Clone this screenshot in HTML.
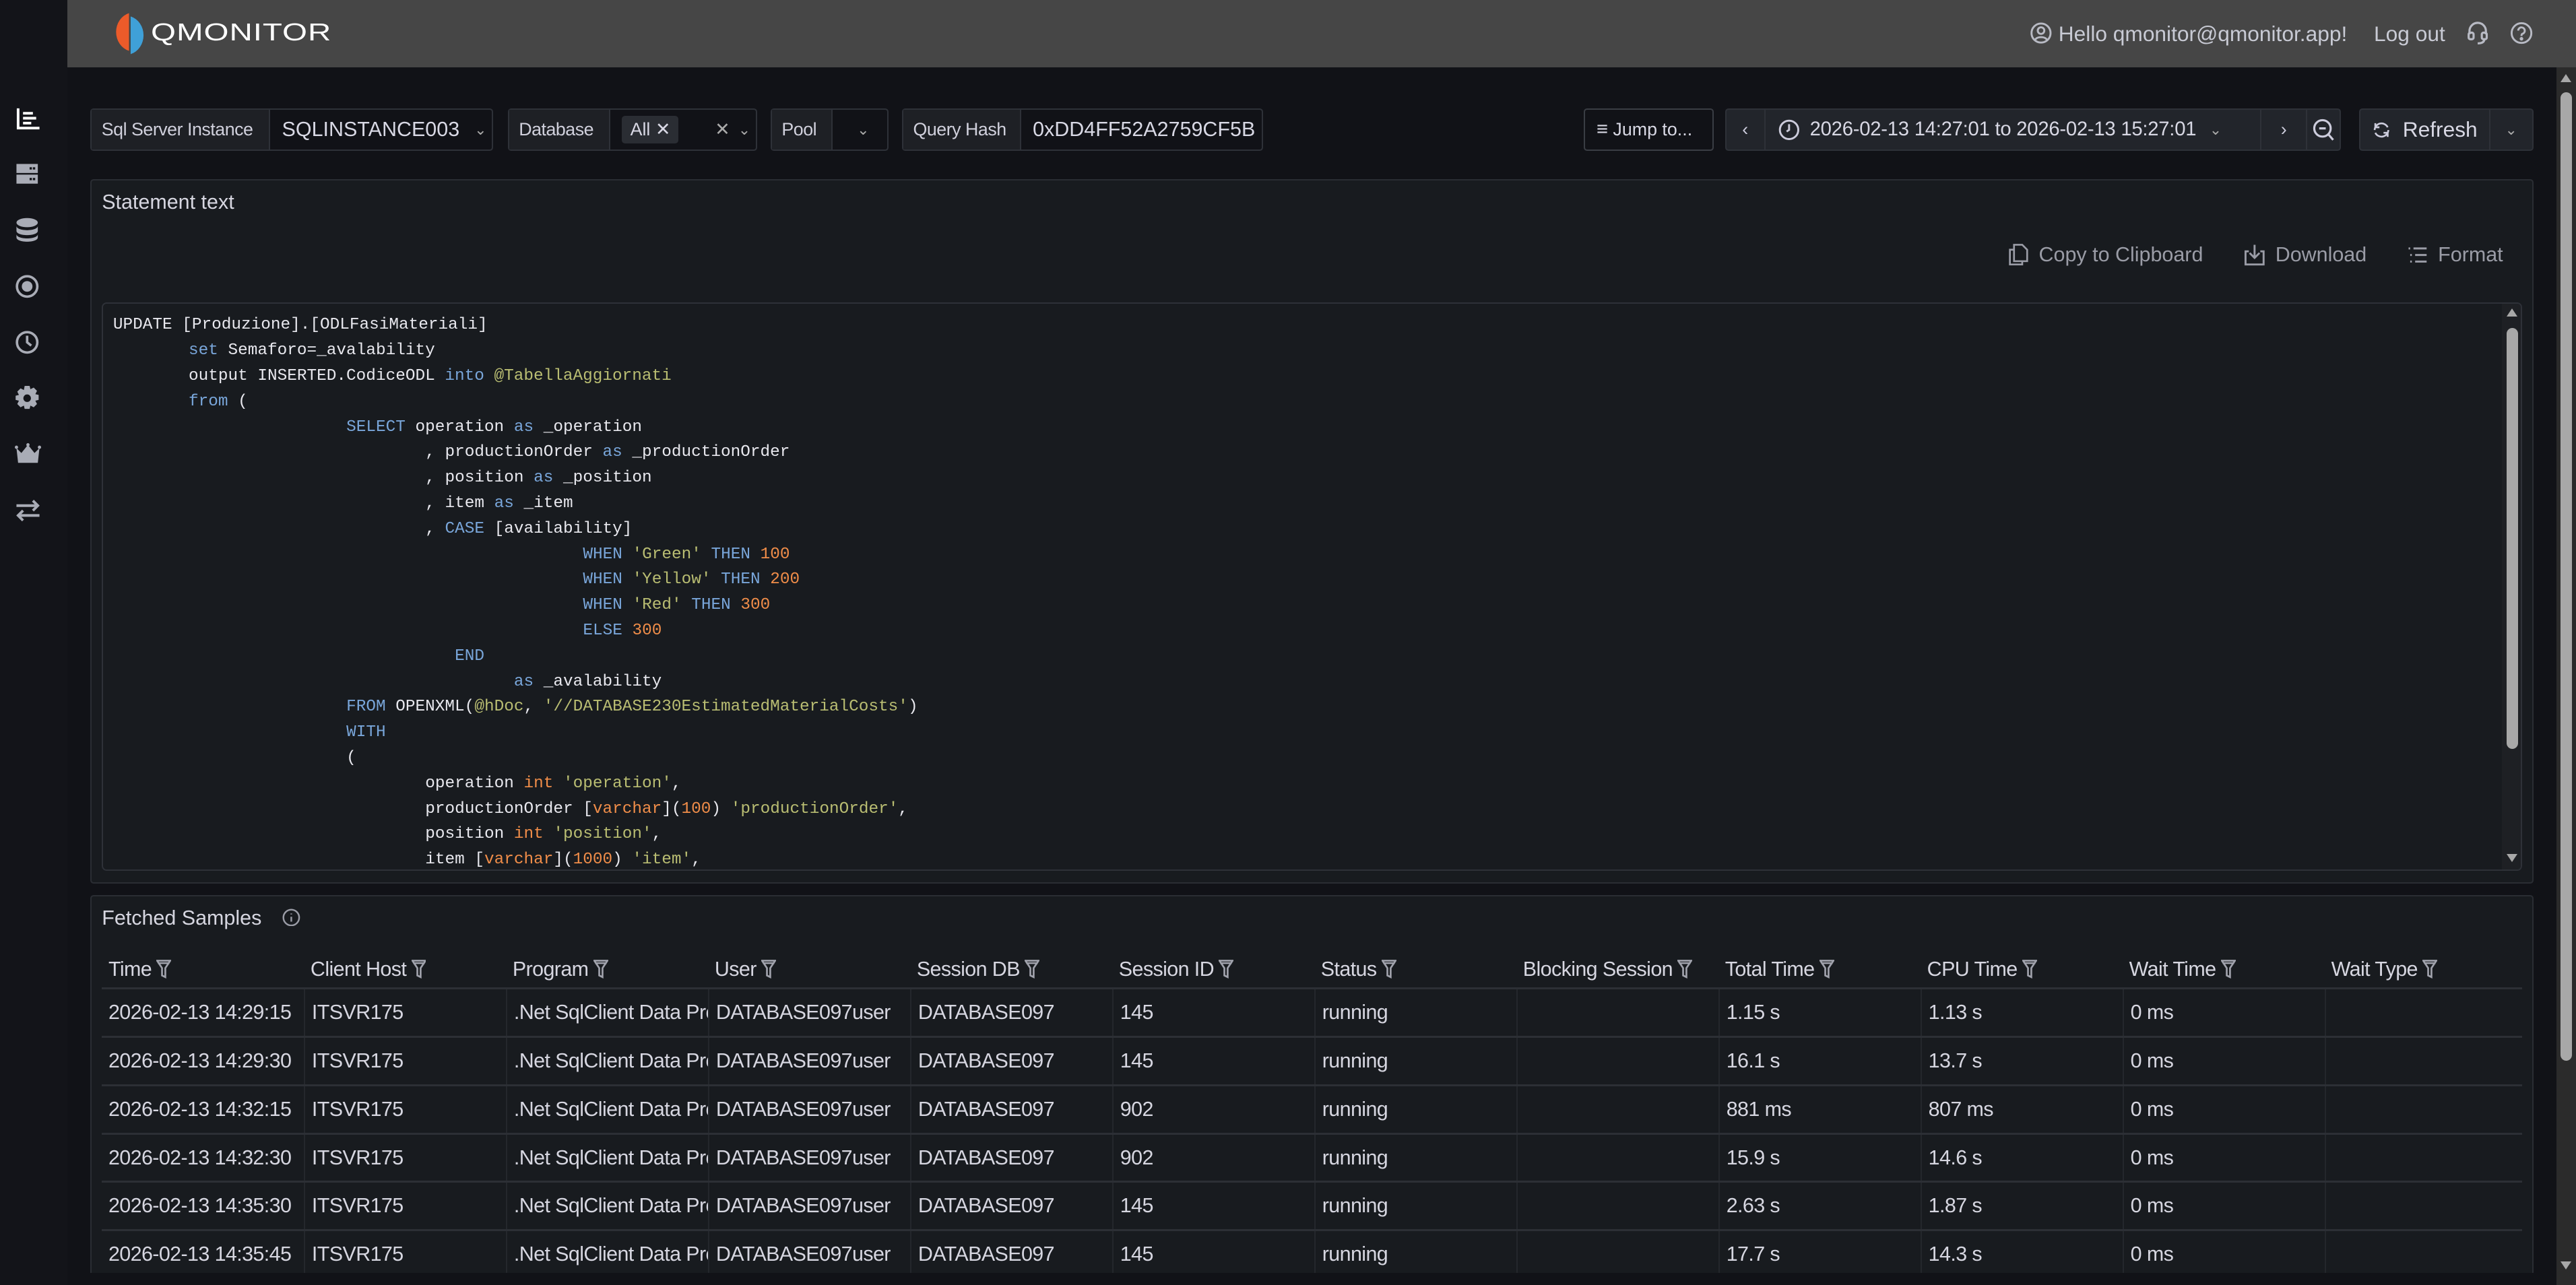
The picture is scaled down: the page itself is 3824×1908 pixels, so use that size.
<!DOCTYPE html>
<html><head><meta charset="utf-8">
<style>
html,body{margin:0;padding:0;background:#111217;width:3824px;height:1908px;overflow:hidden}
#r{zoom:2.43878;width:1568px;height:783px;position:relative;font-family:"Liberation Sans",sans-serif;color:#ccccdc;overflow:hidden}
.a{position:absolute}
.hdr{left:41px;top:0;width:1527px;height:41px;background:#464646}
.side{left:0;top:0;width:41px;height:783px;background:#131419}
.box{position:absolute;top:66px;height:26px;border:1px solid #2e3138;box-sizing:border-box;border-radius:2px;display:flex;align-items:center;font-size:11px;white-space:nowrap}
.lbl{background:#1e2025;height:100%;display:flex;align-items:center;padding:0 6px;border-right:1px solid #2e3138;color:#d0d0dc;flex-shrink:0;letter-spacing:-0.2px}
.val{display:flex;align-items:center;padding:0 7px;font-size:13px;color:#d8d8e4;height:100%;flex-shrink:0;white-space:nowrap}
.panel{position:absolute;left:55px;width:1487px;background:#181b1f;border:1px solid #2a2d33;box-sizing:border-box;border-radius:2px}
.code{position:absolute;left:62px;top:184px;width:1473px;height:346px;border:1px solid #2e3138;border-radius:3px;box-sizing:border-box;overflow:hidden;font-family:"Liberation Mono",monospace;font-size:10px;color:#e8e8ee}
.ln{position:absolute;white-space:pre;height:15px;line-height:15px;margin-top:2px}
.k{color:#79a6da}.s{color:#b9bd72}.n{color:#f08d49}
.tb{position:absolute;left:62px;top:578px;width:1473px;font-size:12.5px;letter-spacing:-0.25px}
.row{position:absolute;left:0;width:1473px;height:29.5px;border-top:1.5px solid #2c2f35;box-sizing:border-box}
.c{position:absolute;top:0;height:100%;width:123px;box-sizing:border-box;padding-left:4px;line-height:28px;white-space:nowrap;overflow:hidden;border-left:1px solid #24272c;color:#d6d6e0}
.h{position:absolute;top:5px;padding-left:4px;color:#d6d6e0;white-space:nowrap}
.f{display:inline-block;vertical-align:-2px;margin-left:3px}
.tbtn{position:absolute;top:148px;font-size:12.5px;color:#9a9ca6;display:flex;align-items:center;gap:6px;white-space:nowrap}
</style></head><body><div id="r">
<div class="a side"></div>
<div class="a hdr"></div>
<svg class="a" style="left:66px;top:7px" width="26" height="27" viewBox="0 0 26 27">
<path d="M12.5 1 A11 12 0 0 0 12.5 24 Z" fill="#ec5b2a"/>
<path d="M13.5 3 A11 12 0 0 1 13.5 26 Z" fill="#3fa0d8"/>
</svg>
<div class="a" style="left:92px;top:11px;font-size:15px;color:#fff;letter-spacing:0.3px;transform:scaleX(1.3);transform-origin:left">QMONITOR</div>
<svg class="a" style="left:1236px;top:13px" width="13" height="14" viewBox="0 0 13 14" fill="none" stroke="#b8bac4" stroke-width="1.2"><circle cx="6.5" cy="7" r="5.8"/><circle cx="6.5" cy="5.5" r="2"/><path d="M3 11c1-2 6-2 7 0"/></svg>
<div class="a" style="left:1253px;top:13px;font-size:13px;color:#c8cad4">Hello qmonitor@qmonitor.app!</div>
<div class="a" style="left:1445px;top:13px;font-size:13px;color:#c8cad4">Log out</div>
<svg class="a" style="left:1501px;top:12px" width="14" height="16" viewBox="0 0 14 16" fill="none" stroke="#b8bac4" stroke-width="1.3"><path d="M2 9V7a5 5 0 0 1 10 0v2"/><rect x="1.5" y="8" width="3" height="4" rx="1"/><rect x="9.5" y="8" width="3" height="4" rx="1"/><path d="M11 12c0 2-2 2.5-4 2.5"/></svg>
<svg class="a" style="left:1528px;top:13px" width="14" height="14" viewBox="0 0 14 14" fill="none" stroke="#b8bac4" stroke-width="1.2"><circle cx="7" cy="7" r="6"/><path d="M5 5.5a2 2 0 1 1 2.5 2c-.5.3-.5.8-.5 1.3"/><circle cx="7" cy="10.5" r=".5" fill="#b8bac4"/></svg>
<svg class="a" style="left:9px;top:64px" width="16" height="16" viewBox="0 0 16 16" fill="none" stroke="#fff" stroke-width="1.6"><path d="M2 2v12h13"/><path d="M5 5h6M5 8h8M5 11h5"/></svg>
<svg class="a" style="left:9px;top:99px" width="15" height="14" viewBox="0 0 15 14" fill="#a9acb6"><rect x="1" y="1" width="13" height="5.5"/><rect x="1" y="7.5" width="13" height="5.5"/><rect x="9" y="3" width="1.4" height="1.4" fill="#131419"/><rect x="11" y="3" width="1.4" height="1.4" fill="#131419"/><rect x="9" y="9.5" width="1.4" height="1.4" fill="#131419"/><rect x="11" y="9.5" width="1.4" height="1.4" fill="#131419"/></svg>
<svg class="a" style="left:9px;top:132px" width="15" height="16" viewBox="0 0 15 16" fill="#a9acb6"><ellipse cx="7.5" cy="3.5" rx="6.5" ry="2.8"/><path d="M1 5.5c0 3.5 13 3.5 13 0v3c0 3.5-13 3.5-13 0z"/><path d="M1 10.5c0 3.5 13 3.5 13 0v2c0 3.5-13 3.5-13 0z"/></svg>
<svg class="a" style="left:9px;top:167px" width="15" height="15" viewBox="0 0 15 15" fill="none" stroke="#a9acb6" stroke-width="1.5"><circle cx="7.5" cy="7.5" r="6.2"/><circle cx="7.5" cy="7.5" r="2.5" fill="#a9acb6"/></svg>
<svg class="a" style="left:9px;top:201px" width="15" height="15" viewBox="0 0 15 15" fill="none" stroke="#a9acb6" stroke-width="1.5"><circle cx="7.5" cy="7.5" r="6.2"/><path d="M7.5 3.5v4l2.5 2"/></svg>
<svg class="a" style="left:9px;top:235px" width="15" height="15" viewBox="0 0 15 15" fill="#a9acb6"><path d="M6 0h3l.5 2 2-1 2 2-1 2 2 .5v3l-2 .5 1 2-2 2-2-1-.5 2H6l-.5-2-2 1-2-2 1-2-2-.5V6l2-.5-1-2 2-2 2 1z"/><circle cx="7.5" cy="7.5" r="2.3" fill="#131419"/></svg>
<svg class="a" style="left:9px;top:270px" width="16" height="13" viewBox="0 0 16 13" fill="#a9acb6"><path d="M1 3l3 3 4-5 4 5 3-3-1 9H2z"/><circle cx="1" cy="2.5" r="1"/><circle cx="8" cy="1" r="1"/><circle cx="15" cy="2.5" r="1"/></svg>
<svg class="a" style="left:9px;top:304px" width="16" height="14" viewBox="0 0 16 14" fill="none" stroke="#a9acb6" stroke-width="1.6"><path d="M1 4h13M11 1l3 3-3 3M15 10H2M5 7l-3 3 3 3"/></svg>
<!-- filters -->
<div class="box" style="left:55px;width:245px"><div class="lbl" style="width:96px">Sql Server Instance</div><div class="val" style="font-size:12.5px">SQLINSTANCE003<span style="margin-left:9px;font-size:9px;color:#aaa">&#8964;</span></div></div>
<div class="box" style="left:309px;width:152px"><div class="lbl" style="width:49px">Database</div><div class="val"><span style="background:#2a2d33;padding:2px 5px;font-size:11px;border-radius:2px;white-space:nowrap">All &#x2715;</span><span style="margin-left:22px;font-size:11px;color:#aaa">&#x2715;</span><span style="margin-left:5px;font-size:9px;color:#aaa">&#8964;</span></div></div>
<div class="box" style="left:469px;width:72px"><div class="lbl" style="width:24px">Pool</div><div class="val" style="padding-left:15px"><span style="font-size:9px;color:#aaa">&#8964;</span></div></div>
<div class="box" style="left:549px;width:220px"><div class="lbl" style="width:59px">Query Hash</div><div class="val" style="font-size:12.5px">0xDD4FF52A2759CF5B</div></div>
<div class="box" style="left:964px;width:79px;border-color:#3a3d44"><div class="val" style="font-size:11px;padding:0 7px"><span style="font-size:12px;margin-right:3px">&#8801;</span>Jump to...</div></div>
<div class="box" style="left:1050px;width:375px;background:#22252b">
 <div style="width:23px;height:100%;border-right:1px solid #2e3138;text-align:center;line-height:24px;font-size:11px;flex-shrink:0">&#8249;</div>
 <div class="val" style="width:302px;box-sizing:border-box;border-right:1px solid #2e3138;padding-left:8px;font-size:12px;letter-spacing:-0.1px"><svg width="13" height="13" viewBox="0 0 13 13" fill="none" stroke="#ccccdc" stroke-width="1.2" style="margin-right:6px"><circle cx="6.5" cy="6.5" r="5.6"/><path d="M6.5 3v3.5l-1.5 1"/></svg>2026-02-13 14:27:01 to 2026-02-13 15:27:01<span style="margin-left:8px;font-size:9px;color:#aaa">&#8964;</span></div>
 <div style="width:27px;height:100%;border-right:1px solid #2e3138;text-align:center;line-height:24px;font-size:11px;flex-shrink:0">&#8250;</div>
 <div style="flex:1;display:flex;justify-content:center"><svg width="13" height="14" viewBox="0 0 13 14" fill="none" stroke="#ccccdc" stroke-width="1.3"><circle cx="6" cy="6" r="5"/><path d="M4 6h4M9.5 9.5l3 3.5"/></svg></div>
</div>
<div class="box" style="left:1436px;width:106px;background:#22252b">
 <div class="val" style="width:79px;box-sizing:border-box;border-right:1px solid #2e3138;padding-left:7px"><svg width="14" height="14" viewBox="0 0 14 14" fill="none" stroke="#ccccdc" stroke-width="1.3" style="margin-right:7px"><path d="M2.5 9A5 5 0 0 0 12 7M11.5 5A5 5 0 0 0 2 7M2.5 2v3h3M11.5 12V9h-3"/></svg>Refresh</div>
 <div style="flex:1;text-align:center;font-size:9px;color:#aaa">&#8964;</div>
</div>
<!-- statement panel -->
<div class="panel" style="top:109px;height:429px"></div>
<div class="a" style="left:62px;top:116px;font-size:12.5px;color:#d6d6e0">Statement text</div>
<div class="tbtn" style="left:1222px"><svg width="13" height="14" viewBox="0 0 13 14" fill="none" stroke="#9a9ca6" stroke-width="1.1"><path d="M4 1h5l3 3v7H4z"/><path d="M4 4H1.5v9H9v-2"/></svg>Copy to Clipboard</div>
<div class="tbtn" style="left:1366px"><svg width="13" height="14" viewBox="0 0 13 14" fill="none" stroke="#9a9ca6" stroke-width="1.2"><path d="M6.5 1v8M3.5 6l3 3 3-3M3 5H1v8h11V5h-2"/></svg>Download</div>
<div class="tbtn" style="left:1465px"><svg width="13" height="12" viewBox="0 0 13 12" fill="none" stroke="#9a9ca6" stroke-width="1.2"><path d="M1 2h1M4 2h8M2 6h1M5 6h7M2 10h1M5 10h7"/></svg>Format</div>
<div class="code">
<div class="ln" style="left:6px;top:4px">UPDATE [Produzione].[ODLFasiMateriali]</div>
<div class="ln" style="left:52px;top:19.5px"><span class="k">set</span> Semaforo=_avalability</div>
<div class="ln" style="left:52px;top:35px">output INSERTED.CodiceODL <span class="k">into</span> <span class="s">@TabellaAggiornati</span></div>
<div class="ln" style="left:52px;top:50.5px"><span class="k">from</span> (</div>
<div class="ln" style="left:148px;top:66px"><span class="k">SELECT</span> operation <span class="k">as</span> _operation</div>
<div class="ln" style="left:196px;top:81.5px">, productionOrder <span class="k">as</span> _productionOrder</div>
<div class="ln" style="left:196px;top:97px">, position <span class="k">as</span> _position</div>
<div class="ln" style="left:196px;top:112.5px">, item <span class="k">as</span> _item</div>
<div class="ln" style="left:196px;top:128px">, <span class="k">CASE</span> [availability]</div>
<div class="ln" style="left:292px;top:143.5px"><span class="k">WHEN</span> <span class="s">'Green'</span> <span class="k">THEN</span> <span class="n">100</span></div>
<div class="ln" style="left:292px;top:159px"><span class="k">WHEN</span> <span class="s">'Yellow'</span> <span class="k">THEN</span> <span class="n">200</span></div>
<div class="ln" style="left:292px;top:174.5px"><span class="k">WHEN</span> <span class="s">'Red'</span> <span class="k">THEN</span> <span class="n">300</span></div>
<div class="ln" style="left:292px;top:190px"><span class="k">ELSE</span> <span class="n">300</span></div>
<div class="ln" style="left:214px;top:205.5px"><span class="k">END</span></div>
<div class="ln" style="left:250px;top:221px"><span class="k">as</span> _avalability</div>
<div class="ln" style="left:148px;top:236.5px"><span class="k">FROM</span> OPENXML(<span class="s">@hDoc</span>, <span class="s">'//DATABASE230EstimatedMaterialCosts'</span>)</div>
<div class="ln" style="left:148px;top:252px"><span class="k">WITH</span></div>
<div class="ln" style="left:148px;top:267.5px">(</div>
<div class="ln" style="left:196px;top:283px">operation <span class="n">int</span> <span class="s">'operation'</span>,</div>
<div class="ln" style="left:196px;top:298.5px">productionOrder [<span class="n">varchar</span>](<span class="n">100</span>) <span class="s">'productionOrder'</span>,</div>
<div class="ln" style="left:196px;top:314px">position <span class="n">int</span> <span class="s">'position'</span>,</div>
<div class="ln" style="left:196px;top:329.5px">item [<span class="n">varchar</span>](<span class="n">1000</span>) <span class="s">'item'</span>,</div>
<div class="a" style="left:1460px;top:0;width:12px;height:346px;background:#1e2024"></div>
<div class="a" style="left:1463px;top:15px;width:7px;height:256px;background:#a8a8a8;border-radius:4px"></div>
<div class="a" style="left:1463px;top:3px;width:0;height:0;border-left:3.5px solid transparent;border-right:3.5px solid transparent;border-bottom:5px solid #a8a8a8"></div>
<div class="a" style="left:1463px;top:335px;width:0;height:0;border-left:3.5px solid transparent;border-right:3.5px solid transparent;border-top:5px solid #a8a8a8"></div>
</div>
<!-- samples panel -->
<div class="panel" style="top:545px;height:240px"></div>
<div class="a" style="left:62px;top:552px;font-size:12.5px;color:#d6d6e0">Fetched Samples</div>
<svg class="a" style="left:172px;top:553px" width="11" height="11" viewBox="0 0 11 11" fill="none" stroke="#9a9ca6" stroke-width="1"><circle cx="5.5" cy="5.5" r="4.8"/><path d="M5.5 5v3M5.5 3v.6"/></svg>
<div class="tb">
<div class="h" style="left:0">Time<svg class="f" width="9" height="12" viewBox="0 0 9 12" fill="none" stroke="#a0a2ac" stroke-width="1.1"><path d="M.5 1h8L5.5 5.5V11l-2-1V5.5z"/><path d="M1 2.5h7"/></svg></div>
<div class="h" style="left:123px">Client Host<svg class="f" width="9" height="12" viewBox="0 0 9 12" fill="none" stroke="#a0a2ac" stroke-width="1.1"><path d="M.5 1h8L5.5 5.5V11l-2-1V5.5z"/><path d="M1 2.5h7"/></svg></div>
<div class="h" style="left:246px">Program<svg class="f" width="9" height="12" viewBox="0 0 9 12" fill="none" stroke="#a0a2ac" stroke-width="1.1"><path d="M.5 1h8L5.5 5.5V11l-2-1V5.5z"/><path d="M1 2.5h7"/></svg></div>
<div class="h" style="left:369px">User<svg class="f" width="9" height="12" viewBox="0 0 9 12" fill="none" stroke="#a0a2ac" stroke-width="1.1"><path d="M.5 1h8L5.5 5.5V11l-2-1V5.5z"/><path d="M1 2.5h7"/></svg></div>
<div class="h" style="left:492px">Session DB<svg class="f" width="9" height="12" viewBox="0 0 9 12" fill="none" stroke="#a0a2ac" stroke-width="1.1"><path d="M.5 1h8L5.5 5.5V11l-2-1V5.5z"/><path d="M1 2.5h7"/></svg></div>
<div class="h" style="left:615px">Session ID<svg class="f" width="9" height="12" viewBox="0 0 9 12" fill="none" stroke="#a0a2ac" stroke-width="1.1"><path d="M.5 1h8L5.5 5.5V11l-2-1V5.5z"/><path d="M1 2.5h7"/></svg></div>
<div class="h" style="left:738px">Status<svg class="f" width="9" height="12" viewBox="0 0 9 12" fill="none" stroke="#a0a2ac" stroke-width="1.1"><path d="M.5 1h8L5.5 5.5V11l-2-1V5.5z"/><path d="M1 2.5h7"/></svg></div>
<div class="h" style="left:861px">Blocking Session<svg class="f" width="9" height="12" viewBox="0 0 9 12" fill="none" stroke="#a0a2ac" stroke-width="1.1"><path d="M.5 1h8L5.5 5.5V11l-2-1V5.5z"/><path d="M1 2.5h7"/></svg></div>
<div class="h" style="left:984px">Total Time<svg class="f" width="9" height="12" viewBox="0 0 9 12" fill="none" stroke="#a0a2ac" stroke-width="1.1"><path d="M.5 1h8L5.5 5.5V11l-2-1V5.5z"/><path d="M1 2.5h7"/></svg></div>
<div class="h" style="left:1107px">CPU Time<svg class="f" width="9" height="12" viewBox="0 0 9 12" fill="none" stroke="#a0a2ac" stroke-width="1.1"><path d="M.5 1h8L5.5 5.5V11l-2-1V5.5z"/><path d="M1 2.5h7"/></svg></div>
<div class="h" style="left:1230px">Wait Time<svg class="f" width="9" height="12" viewBox="0 0 9 12" fill="none" stroke="#a0a2ac" stroke-width="1.1"><path d="M.5 1h8L5.5 5.5V11l-2-1V5.5z"/><path d="M1 2.5h7"/></svg></div>
<div class="h" style="left:1353px">Wait Type<svg class="f" width="9" height="12" viewBox="0 0 9 12" fill="none" stroke="#a0a2ac" stroke-width="1.1"><path d="M.5 1h8L5.5 5.5V11l-2-1V5.5z"/><path d="M1 2.5h7"/></svg></div>

<div class="row" style="top:23px"><div class="c" style="left:0;border-left:0">2026-02-13 14:29:15</div><div class="c" style="left:123px">ITSVR175</div><div class="c" style="left:246px">.Net SqlClient Data Provider</div><div class="c" style="left:369px">DATABASE097user</div><div class="c" style="left:492px">DATABASE097</div><div class="c" style="left:615px">145</div><div class="c" style="left:738px">running</div><div class="c" style="left:861px"></div><div class="c" style="left:984px">1.15 s</div><div class="c" style="left:1107px">1.13 s</div><div class="c" style="left:1230px">0 ms</div><div class="c" style="left:1353px;width:120px"></div></div>
<div class="row" style="top:52.5px"><div class="c" style="left:0;border-left:0">2026-02-13 14:29:30</div><div class="c" style="left:123px">ITSVR175</div><div class="c" style="left:246px">.Net SqlClient Data Provider</div><div class="c" style="left:369px">DATABASE097user</div><div class="c" style="left:492px">DATABASE097</div><div class="c" style="left:615px">145</div><div class="c" style="left:738px">running</div><div class="c" style="left:861px"></div><div class="c" style="left:984px">16.1 s</div><div class="c" style="left:1107px">13.7 s</div><div class="c" style="left:1230px">0 ms</div><div class="c" style="left:1353px;width:120px"></div></div>
<div class="row" style="top:82px"><div class="c" style="left:0;border-left:0">2026-02-13 14:32:15</div><div class="c" style="left:123px">ITSVR175</div><div class="c" style="left:246px">.Net SqlClient Data Provider</div><div class="c" style="left:369px">DATABASE097user</div><div class="c" style="left:492px">DATABASE097</div><div class="c" style="left:615px">902</div><div class="c" style="left:738px">running</div><div class="c" style="left:861px"></div><div class="c" style="left:984px">881 ms</div><div class="c" style="left:1107px">807 ms</div><div class="c" style="left:1230px">0 ms</div><div class="c" style="left:1353px;width:120px"></div></div>
<div class="row" style="top:111.5px"><div class="c" style="left:0;border-left:0">2026-02-13 14:32:30</div><div class="c" style="left:123px">ITSVR175</div><div class="c" style="left:246px">.Net SqlClient Data Provider</div><div class="c" style="left:369px">DATABASE097user</div><div class="c" style="left:492px">DATABASE097</div><div class="c" style="left:615px">902</div><div class="c" style="left:738px">running</div><div class="c" style="left:861px"></div><div class="c" style="left:984px">15.9 s</div><div class="c" style="left:1107px">14.6 s</div><div class="c" style="left:1230px">0 ms</div><div class="c" style="left:1353px;width:120px"></div></div>
<div class="row" style="top:141px"><div class="c" style="left:0;border-left:0">2026-02-13 14:35:30</div><div class="c" style="left:123px">ITSVR175</div><div class="c" style="left:246px">.Net SqlClient Data Provider</div><div class="c" style="left:369px">DATABASE097user</div><div class="c" style="left:492px">DATABASE097</div><div class="c" style="left:615px">145</div><div class="c" style="left:738px">running</div><div class="c" style="left:861px"></div><div class="c" style="left:984px">2.63 s</div><div class="c" style="left:1107px">1.87 s</div><div class="c" style="left:1230px">0 ms</div><div class="c" style="left:1353px;width:120px"></div></div>
<div class="row" style="top:170.5px"><div class="c" style="left:0;border-left:0">2026-02-13 14:35:45</div><div class="c" style="left:123px">ITSVR175</div><div class="c" style="left:246px">.Net SqlClient Data Provider</div><div class="c" style="left:369px">DATABASE097user</div><div class="c" style="left:492px">DATABASE097</div><div class="c" style="left:615px">145</div><div class="c" style="left:738px">running</div><div class="c" style="left:861px"></div><div class="c" style="left:984px">17.7 s</div><div class="c" style="left:1107px">14.3 s</div><div class="c" style="left:1230px">0 ms</div><div class="c" style="left:1353px;width:120px"></div></div>
</div>
<div class="a" style="left:41px;top:775px;width:1515px;height:8px;background:#111217"></div>
<div class="a" style="left:1556px;top:41px;width:12px;height:742px;background:#2b2b2b"></div>
<div class="a" style="left:1558.5px;top:56px;width:7px;height:590px;background:#a8a8a8;border-radius:4px"></div>
<div class="a" style="left:1558.5px;top:45px;width:0;height:0;border-left:3.5px solid transparent;border-right:3.5px solid transparent;border-bottom:5px solid #a8a8a8"></div>
<div class="a" style="left:1558.5px;top:768px;width:0;height:0;border-left:3.5px solid transparent;border-right:3.5px solid transparent;border-top:5px solid #a8a8a8"></div>
</div></body></html>
